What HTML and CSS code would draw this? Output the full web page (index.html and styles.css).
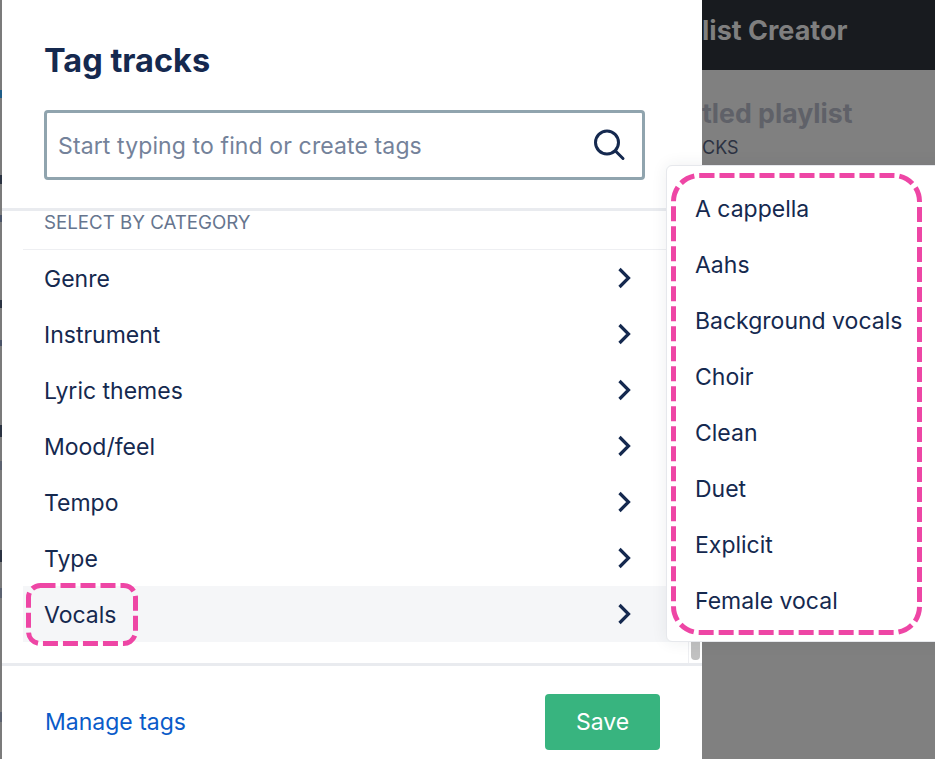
FILE: index.html
```html
<!DOCTYPE html>
<html lang="en">
<head>
<meta charset="utf-8">
<title>Tag tracks</title>
<link rel="stylesheet" href="styles.css">
</head>
<body>
<div class="page">
  <div class="edge"></div>
  <section class="panel">
    <header class="panel-head">
      <h1 class="title">Tag tracks</h1>
      <div class="search">
        <span class="placeholder">Start typing to find or create tags</span>
        <svg class="search-icon" width="34" height="34" viewBox="0 0 34 34"><circle cx="15" cy="14.5" r="11.5" fill="none" stroke="#15294f" stroke-width="3"/><path d="M23.5 23l7.500 7.500" fill="none" stroke="#15294f" stroke-width="3" stroke-linecap="round"/></svg>
      </div>
    </header>
    <div class="body">
      <div class="list">
        <div class="list-label">SELECT BY CATEGORY</div>
        <ul class="rows">
          <li class="row"><span class="row-text">Genre</span><svg class="chev" width="14" height="22" viewBox="0 0 14 22"><path d="M2.500 2l9 9-9 9" fill="none" stroke="#15294f" stroke-width="3.200"/></svg></li>
          <li class="row"><span class="row-text">Instrument</span><svg class="chev" width="14" height="22" viewBox="0 0 14 22"><path d="M2.500 2l9 9-9 9" fill="none" stroke="#15294f" stroke-width="3.200"/></svg></li>
          <li class="row"><span class="row-text">Lyric themes</span><svg class="chev" width="14" height="22" viewBox="0 0 14 22"><path d="M2.500 2l9 9-9 9" fill="none" stroke="#15294f" stroke-width="3.200"/></svg></li>
          <li class="row"><span class="row-text">Mood/feel</span><svg class="chev" width="14" height="22" viewBox="0 0 14 22"><path d="M2.500 2l9 9-9 9" fill="none" stroke="#15294f" stroke-width="3.200"/></svg></li>
          <li class="row"><span class="row-text">Tempo</span><svg class="chev" width="14" height="22" viewBox="0 0 14 22"><path d="M2.500 2l9 9-9 9" fill="none" stroke="#15294f" stroke-width="3.200"/></svg></li>
          <li class="row"><span class="row-text">Type</span><svg class="chev" width="14" height="22" viewBox="0 0 14 22"><path d="M2.500 2l9 9-9 9" fill="none" stroke="#15294f" stroke-width="3.200"/></svg></li>
          <li class="row row-active"><span class="row-text">Vocals</span><svg class="chev" width="14" height="22" viewBox="0 0 14 22"><path d="M2.500 2l9 9-9 9" fill="none" stroke="#15294f" stroke-width="3.200"/></svg></li>
        </ul>
      </div>
      <div class="scrollbar"><div class="thumb"></div></div>
    </div>
    <footer class="panel-foot">
      <a class="manage" href="#">Manage tags</a>
      <button class="save" type="button">Save</button>
    </footer>
  </section>
  <main class="behind">
    <div class="behind-bar"><span class="bar-title">list Creator</span></div>
    <div class="behind-body">
      <div class="playlist-name">tled playlist</div>
      <div class="playlist-count">CKS</div>
    </div>
  </main>
  <ul class="flyout">
    <li>A cappella</li>
    <li>Aahs</li>
    <li>Background vocals</li>
    <li>Choir</li>
    <li>Clean</li>
    <li>Duet</li>
    <li>Explicit</li>
    <li>Female vocal</li>
  </ul>
  <svg class="mark mark-flyout" width="251" height="462" viewBox="0 0 251 462"><rect x="2.500" y="2.500" width="246" height="457" rx="26" fill="none" stroke="#ee46a5" stroke-width="5" stroke-dasharray="15 5"/></svg>
  <svg class="mark mark-vocals" width="112" height="63" viewBox="0 0 112 63"><rect x="2.500" y="2.500" width="107" height="58" rx="12" fill="none" stroke="#ee46a5" stroke-width="5" stroke-dasharray="15 5"/></svg>
</div>
</body>
</html>
```
FILE: styles.css
```css
* { box-sizing: border-box; }
html, body { margin: 0; padding: 0; }
body { font-family: "Inter", "Liberation Sans", sans-serif; color: #15294f; background: #808080; }
.page { position: relative; display: flex; width: 935px; height: 759px; overflow: hidden; }
.edge { width: 2px; flex: none; background:
  linear-gradient(to bottom,
    #7b7b7b 0 90px, #1f5d87 90px 98px, #7b7b7b 98px 175px, #2b3342 175px 184px,
    #7b7b7b 184px 215px, #4a5468 215px 222px, #7b7b7b 222px 300px, #2b3342 300px 308px,
    #7b7b7b 308px 340px, #4a5468 340px 346px, #7b7b7b 346px 425px, #2b3342 425px 437px,
    #7b7b7b 437px 461px, #5c6270 461px 470px, #7b7b7b 470px 550px, #2b3342 550px 562px,
    #7b7b7b 562px 588px, #5c6270 588px 598px, #7b7b7b 598px 712px, #5c6270 712px 722px, #7b7b7b 722px); }
.panel { width: 700px; flex: none; display: flex; flex-direction: column; background: #fff; }
.panel-head { height: 208px; padding: 39px 43px 0 42px; flex: none; }
.title { margin: 0; font-size: 32.500px; line-height: 44px; font-weight: 700; color: #15294f; }
.search { margin-top: 27px; width: 601px; height: 70px; border: 3px solid #90a4ae; border-radius: 4px; display: flex; align-items: center; justify-content: space-between; padding: 0 15px 0 11px; }
.placeholder { font-size: 23px; letter-spacing: 0.12px; color: #74829a; padding-top: 2px; }
.search-icon { display: block; margin-right: 1px; }
.body { flex: none; height: 458px; display: flex; border-top: 3px solid #e9ebef; border-bottom: 3px solid #e9ebef; }
.list { width: 686px; flex: none; padding-left: 21px; }
.list-label { height: 39px; padding: 0 0 0 21px; border-bottom: 1px solid #eeeff2; font-size: 18.700px; line-height: 24px; color: #66758e; }
.rows { list-style: none; margin: 0; padding: 0; }
.row { height: 56px; display: flex; align-items: center; justify-content: space-between; padding: 0 57px 0 21px; font-size: 23px; }
.row-text { padding-top: 2px; }
.row-active { background: #f5f6f8; }
.chev { display: block; }
.scrollbar { width: 14px; flex: none; border-left: 1px solid #eeeff2; display: flex; flex-direction: column; justify-content: flex-end; padding: 0 2px 3px 2px; }
.thumb { height: 22px; background: #c1c1c1; border-radius: 4px; }
.panel-foot { flex: 1; display: flex; align-items: center; justify-content: space-between; padding: 18px 42px 0 43px; }
.manage { font-size: 23px; color: #0a5bc9; text-decoration: none; }
.save { width: 115px; height: 56px; border: 0; border-radius: 4px; background: #38b47f; color: #fff; font: inherit; font-size: 23px; }
.behind { flex: 1; display: flex; flex-direction: column; overflow: hidden; }
.behind-bar { height: 70px; background: #181b1f; display: flex; align-items: center; flex: none; padding-bottom: 9px; }
.bar-title { font-size: 27px; font-weight: 700; color: #7f7f7f; white-space: nowrap; }
.behind-body { flex: 1; background: #808080; padding-top: 24px; }
.playlist-name { font-size: 26.700px; line-height: 38px; font-weight: 700; color: #5f6168; white-space: nowrap; }
.playlist-count { font-size: 18px; line-height: 30px; color: #2c3242; padding-top: 1px; }
.flyout { position: absolute; left: 666px; top: 165px; width: 290px; height: 477px; margin: 0; padding: 15px 0 0 28px; list-style: none; background: #fff; border: 1px solid #e6e8ec; border-radius: 6px; box-shadow: 0 0 16px rgba(40, 50, 70, 0.08); font-size: 23px; }
.flyout li { height: 56px; line-height: 56px; white-space: nowrap; }
.mark { position: absolute; display: block; }
.mark-flyout { left: 671px; top: 173px; }
.mark-vocals { left: 26px; top: 583px; }
```
